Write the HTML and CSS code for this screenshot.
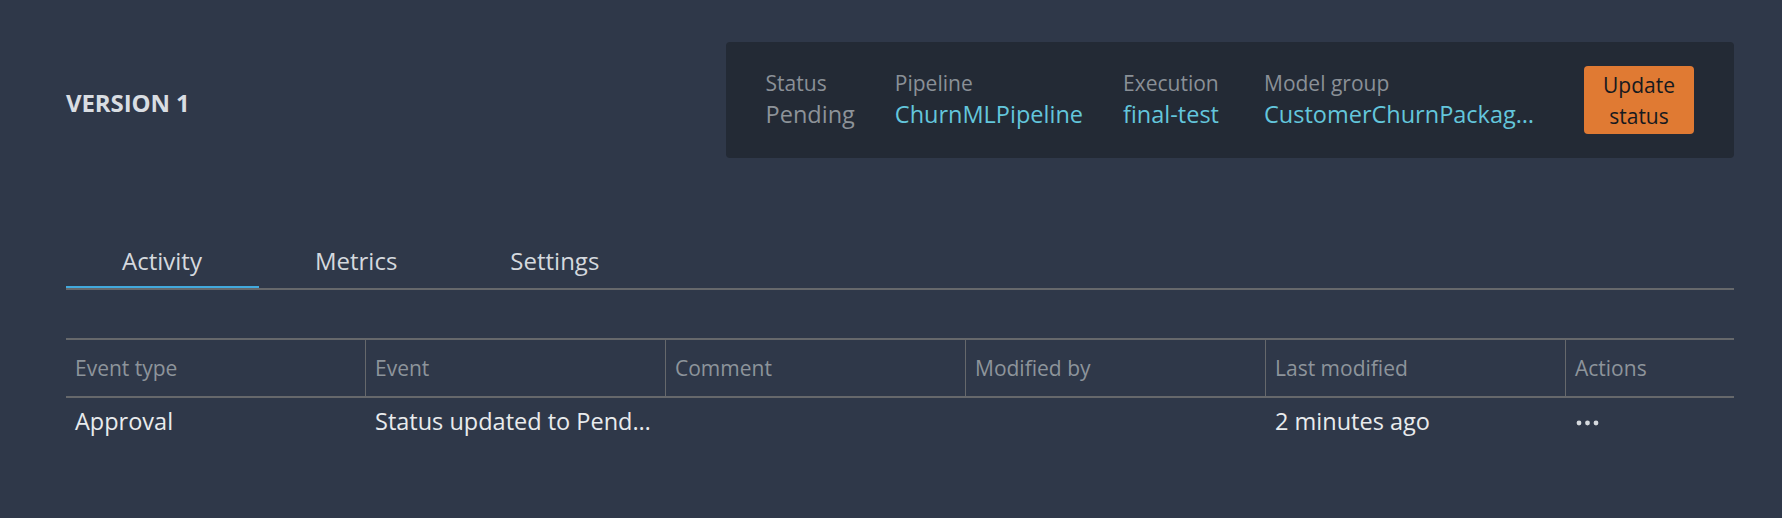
FILE: index.html
```html
<!DOCTYPE html>
<html lang="en">
<head>
<meta charset="utf-8">
<title>Version 1</title>
<link rel="stylesheet" href="styles.css">
</head>
<body>
<div class="page">
  <header class="header">
    <h1 class="title">VERSION 1</h1>
    <section class="summary">
      <div class="fields">
        <div class="field">
          <div class="field-label">Status</div>
          <div class="field-value muted">Pending</div>
        </div>
        <div class="field">
          <div class="field-label">Pipeline</div>
          <div class="field-value link">ChurnMLPipeline</div>
        </div>
        <div class="field field-exec">
          <div class="field-label">Execution</div>
          <div class="field-value link">final-test</div>
        </div>
        <div class="field field-wide">
          <div class="field-label">Model group</div>
          <div class="field-value link truncate">CustomerChurnPackageGroup</div>
        </div>
      </div>
      <button class="btn-primary" type="button">Update status</button>
    </section>
  </header>

  <nav class="tabs">
    <div class="tab tab-active">Activity</div>
    <div class="tab">Metrics</div>
    <div class="tab">Settings</div>
  </nav>

  <div class="table">
    <div class="row row-head">
      <div class="cell">Event type</div>
      <div class="cell">Event</div>
      <div class="cell">Comment</div>
      <div class="cell">Modified by</div>
      <div class="cell">Last modified</div>
      <div class="cell">Actions</div>
    </div>
    <div class="row row-body">
      <div class="cell">Approval</div>
      <div class="cell truncate">Status updated to PendingManualApproval</div>
      <div class="cell"></div>
      <div class="cell"></div>
      <div class="cell">2 minutes ago</div>
      <div class="cell">
        <svg class="dots" width="24" height="6" viewBox="0 0 24 6" aria-label="More actions">
          <circle cx="3" cy="3" r="2.4"/>
          <circle cx="11.5" cy="3" r="2.4"/>
          <circle cx="20" cy="3" r="2.4"/>
        </svg>
      </div>
    </div>
  </div>
</div>
</body>
</html>
```

FILE: styles.css
```css
* { box-sizing: border-box; }

html, body {
  margin: 0;
  padding: 0;
  background: #2f3849;
}

body {
  font-family: "Open Sans", "Noto Sans", sans-serif;
  color: #e9ebed;
}

.page {
  padding: 42px 48px 0 66px;
}

.header {
  display: flex;
  justify-content: space-between;
  align-items: center;
}

.title {
  margin: 0;
  padding-top: 6px;
  font-size: 24px;
  line-height: 36px;
  font-weight: 700;
  color: #d9dde2;
  letter-spacing: -0.1px;
}

.summary {
  display: flex;
  align-items: center;
  gap: 40px;
  background: #232a35;
  border-radius: 4px;
  padding: 24px 40px;
}

.fields {
  display: flex;
  gap: 40px;
  margin-bottom: 2px;
}

.field {
  display: flex;
  flex-direction: column;
  min-width: 0;
}

.field-exec {
  min-width: 101px;
}

.field-wide {
  width: 280px;
}

.field-label {
  font-size: 21px;
  line-height: 30px;
  color: #8a9097;
  white-space: nowrap;
}

.field-value {
  font-size: 23.5px;
  line-height: 32px;
  white-space: nowrap;
}

.muted { color: #8d9399; }
.link { color: #63c6dc; }

.truncate {
  overflow: hidden;
  text-overflow: ellipsis;
  white-space: nowrap;
}

.btn-primary {
  width: 110px;
  height: 68px;
  padding: 4px 12px 2px;
  border: none;
  border-radius: 4px;
  background: #e07a33;
  color: #16191f;
  font-family: inherit;
  font-size: 21px;
  line-height: 31px;
  text-align: center;
}

.tabs {
  display: flex;
  margin-top: 79px;
  border-bottom: 2px solid #66686b;
}

.tab {
  padding: 6px 57px 7px 56px;
  font-size: 24px;
  line-height: 36px;
  color: #d5d9de;
  border-bottom: 2px solid transparent;
}

.tab-active {
  border-bottom-color: #42a9dd;
}

.table {
  margin-top: 48px;
  border-top: 2px solid #66686b;
}

.row {
  display: grid;
  grid-template-columns: 299px 300px 300px 300px 300px 1fr;
}

.row-head {
  height: 58px;
  border-bottom: 2px solid #66686b;
}

.row-head .cell {
  display: flex;
  align-items: center;
  padding: 0 9px;
  font-size: 21px;
  line-height: 30px;
  color: #8d949b;
  white-space: nowrap;
}

.row-head .cell + .cell {
  border-left: 1px solid #66686b;
}

.row-body .cell {
  padding: 6px 9px 0;
  font-size: 23.5px;
  line-height: 34px;
  color: #e9ebed;
  min-width: 0;
}

.row-body .cell:first-child { padding-left: 9px; }
.row-body .cell + .cell { padding-left: 10px; }

.dots {
  display: block;
  margin-top: 16px;
  margin-left: 1px;
  fill: #d5d9de;
}
```
